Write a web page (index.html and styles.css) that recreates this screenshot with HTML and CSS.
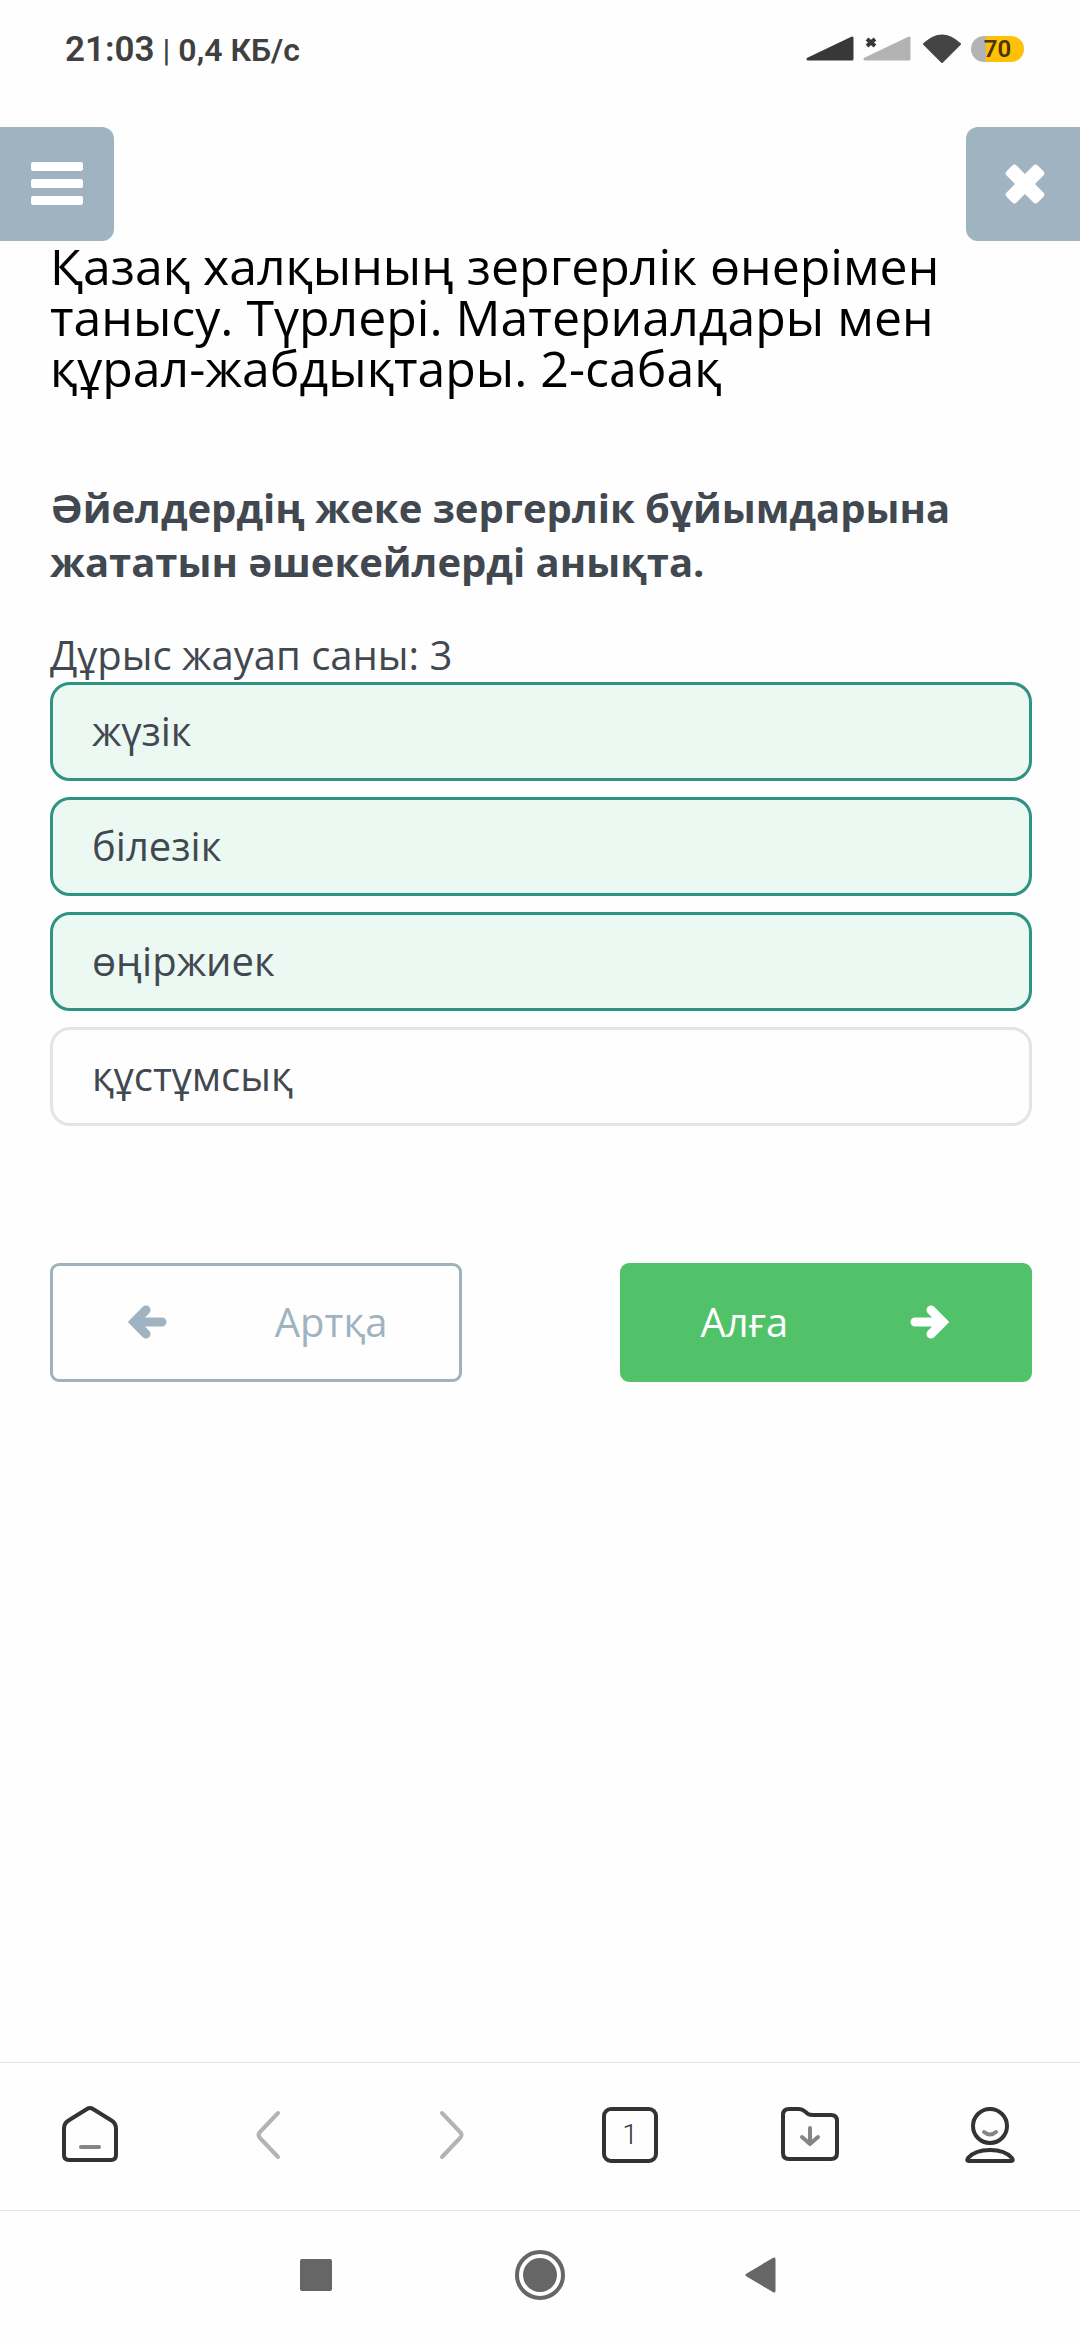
FILE: index.html
```html
<!DOCTYPE html>
<html lang="kk">
<head>
<meta charset="utf-8">
<meta name="viewport" content="width=device-width, initial-scale=1">
<title>Қазақ халқының зергерлік өнерімен танысу</title>
<link rel="stylesheet" href="styles.css">
</head>
<body>
<div class="status">
  <div class="status-text"><span class="clock">21:03</span><span class="divider">|</span><span class="speed">0,4 КБ/с</span></div>
  <div class="status-icons">
    <svg class="signal" width="48" height="26" viewBox="0 0 48 26" aria-hidden="true"><path d="M2 23 46 2V23Z" fill="#383838" stroke="#383838" stroke-width="3" stroke-linejoin="round"/></svg>
    <svg class="signal" width="48" height="26" viewBox="0 0 48 26" aria-hidden="true"><path d="M2 23 46 2V23Z" fill="#b3b3b3" stroke="#b3b3b3" stroke-width="3" stroke-linejoin="round"/><path d="M4 3 12 10M12 3 4 10" stroke="#383838" stroke-width="4"/></svg>
    <svg class="wifi" width="40" height="30" viewBox="0 0 40 30" aria-hidden="true"><path d="M2 10Q20-7 38 10L20 28Z" fill="#444" stroke="#444" stroke-width="2" stroke-linejoin="round"/></svg>
    <span class="battery">70</span>
  </div>
</div>

<header class="header">
  <button class="corner corner-menu" type="button" aria-label="Мәзір">
    <svg width="52" height="44" viewBox="0 0 52 44"><path fill="#fff" d="M2 0H50a2 2 0 0 1 2 2V7a2 2 0 0 1-2 2H2A2 2 0 0 1 0 7V2A2 2 0 0 1 2 0ZM2 17H50a2 2 0 0 1 2 2V24a2 2 0 0 1-2 2H2a2 2 0 0 1-2-2V19a2 2 0 0 1 2-2ZM2 34H50a2 2 0 0 1 2 2V41a2 2 0 0 1-2 2H2a2 2 0 0 1-2-2V36a2 2 0 0 1 2-2Z"/></svg>
  </button>
  <button class="corner corner-close" type="button" aria-label="Жабу">
    <svg width="42" height="42" viewBox="-21 -21 42 42"><g fill="#fff"><rect x="-22" y="-7" width="44" height="14" rx="3" transform="rotate(45)"/><rect x="-22" y="-7" width="44" height="14" rx="3" transform="rotate(-45)"/></g></svg>
  </button>
</header>

<main class="content">
  <h1 class="title">Қазақ халқының зергерлік өнерімен танысу. Түрлері. Материалдары мен құрал-жабдықтары. 2-сабақ</h1>
  <h2 class="question">Әйелдердің жеке зергерлік бұйымдарына жататын әшекейлерді анықта.</h2>
  <p class="hint">Дұрыс жауап саны: 3</p>
  <div class="options">
    <label class="option"><input class="option-input" type="checkbox" checked>жүзік</label>
    <label class="option"><input class="option-input" type="checkbox" checked>білезік</label>
    <label class="option"><input class="option-input" type="checkbox" checked>өңіржиек</label>
    <label class="option"><input class="option-input" type="checkbox">құстұмсық</label>
  </div>
  <div class="actions">
    <button class="action action-back" type="button">
      <svg width="40" height="36" viewBox="0 0 40 36" aria-hidden="true"><path d="M18 6 6 18 18 30M6 18H34" fill="none" stroke="currentColor" stroke-width="9" stroke-linecap="round" stroke-linejoin="miter"/><path d="M7 12 16 8V28L7 24Z" fill="currentColor"/></svg>
      <span>Артқа</span>
    </button>
    <button class="action action-next" type="button">
      <span>Алға</span>
      <svg width="40" height="36" viewBox="0 0 40 36" aria-hidden="true"><path d="M22 6 34 18 22 30M34 18H6" fill="none" stroke="currentColor" stroke-width="9" stroke-linecap="round" stroke-linejoin="miter"/><path d="M33 12 24 8V28L33 24Z" fill="currentColor"/></svg>
    </button>
  </div>
</main>

<nav class="toolbar" aria-label="Браузер">
  <button class="tool" type="button" aria-label="Басты бет">
    <svg width="60" height="60" viewBox="0 0 60 60" fill="none" stroke-width="4" stroke-linecap="round"><path stroke="#333" d="M4 24Q4 18 8.500 15.500L27 4Q30 2 33 4L51.500 15.500Q56 18 56 24V50Q56 55 51 55H9Q4 55 4 50Z"/><path stroke="#858585" d="M21 42H39"/></svg>
  </button>
  <button class="tool" type="button" aria-label="Артқа">
    <svg width="60" height="60" viewBox="0 0 60 60" fill="none" stroke="#b3b3b3" stroke-width="4" stroke-linecap="round"><path d="M38 8 20 27Q17 30 20 33L38 52"/></svg>
  </button>
  <button class="tool" type="button" aria-label="Алға">
    <svg width="60" height="60" viewBox="0 0 60 60" fill="none" stroke="#b3b3b3" stroke-width="4" stroke-linecap="round"><path d="M22 8 40 27Q43 30 40 33L22 52"/></svg>
  </button>
  <button class="tool" type="button" aria-label="Қойындылар: 1"><span class="tabs">1</span></button>
  <button class="tool" type="button" aria-label="Жүктемелер">
    <svg width="60" height="60" viewBox="0 0 60 60" fill="none" stroke-width="4" stroke-linecap="round" stroke-linejoin="round"><path stroke="#333" d="M3 10Q3 4 9 4H19Q22 4 25 6.500L28 9Q30 10 33 10H51Q57 10 57 16V48Q57 54 51 54H9Q3 54 3 48Z"/><path stroke="#858585" d="M30 23V39M22 32 30 39 38 32"/></svg>
  </button>
  <button class="tool" type="button" aria-label="Профиль">
    <svg width="60" height="60" viewBox="0 0 60 60" fill="none" stroke-width="4" stroke-linecap="round"><ellipse stroke="#333" cx="30" cy="21" rx="17" ry="17"/><path stroke="#858585" d="M24 27Q30 32 36 27"/><path stroke="#333" d="M9 56Q6 56 8 53Q15 45 30 45Q45 45 52 53Q54 56 51 56Z"/></svg>
  </button>
</nav>

<nav class="system" aria-label="Жүйе">
  <button class="tool" type="button" aria-label="Соңғы қолданбалар"><svg width="32" height="32" viewBox="0 0 32 32"><rect width="32" height="32" rx="2" fill="#666"/></svg></button>
  <button class="tool" type="button" aria-label="Үй"><svg width="50" height="50" viewBox="0 0 50 50"><circle cx="25" cy="25" r="23" fill="none" stroke="#666" stroke-width="4"/><circle cx="25" cy="25" r="17" fill="#666"/></svg></button>
  <button class="tool" type="button" aria-label="Қайту"><svg width="40" height="38" viewBox="0 0 40 38"><path d="M3 19 30 3V35Z" fill="#666" stroke="#666" stroke-width="3" stroke-linejoin="round"/></svg></button>
</nav>
</body>
</html>
```
FILE: styles.css
```css
* {
  box-sizing: border-box;
}

body {
  margin: 0;
  min-height: 100vh;
  display: flex;
  flex-direction: column;
  background: #fefefe;
  color: #414850;
  font-family: "Open Sans", "Noto Sans", sans-serif;
  font-size: 40px;
  line-height: 54px;
}

button {
  margin: 0;
  padding: 0;
  border: 0;
  background: none;
  color: inherit;
  font: inherit;
  cursor: pointer;
}

svg {
  display: block;
}

/* Phone status bar */
.status {
  display: flex;
  justify-content: space-between;
  align-items: flex-start;
  padding: 30px 56px 57px 65px;
  color: #404040;
  font-family: Roboto, sans-serif;
  font-weight: 600;
  line-height: 40px;
}

.status-text {
  display: flex;
  align-items: baseline;
  gap: 8px;
}

.clock {
  font-size: 35px;
}

.divider,
.speed {
  font-size: 32px;
}

.divider {
  font-weight: 400;
}

.status-icons {
  display: flex;
  align-items: center;
  gap: 9px;
  height: 38px;
}

.wifi {
  margin-left: 2px;
}

.battery {
  width: 53px;
  height: 26px;
  border-radius: 13px;
  background: linear-gradient(to right, #b3b3b3 15px, #ffc107 15px);
  color: #4a3600;
  font-size: 24px;
  line-height: 27px;
  text-align: center;
}

/* Lesson header */
.header {
  display: flex;
  justify-content: space-between;
}

.corner {
  display: flex;
  align-items: center;
  width: 114px;
  height: 114px;
  background: #9fb3c0;
}

.corner-menu {
  padding-left: 31px;
  border-radius: 0 12px 12px 0;
}

.corner-close {
  padding-left: 38px;
  border-radius: 12px 0 0 12px;
}

.content {
  flex: 1;
  padding: 0 48px 0 50px;
}

.title {
  margin: 0;
  color: #000;
  font-size: 50px;
  font-weight: 400;
  line-height: 51px;
}

.question {
  margin: 87px 0 0;
  font-size: 40px;
  font-weight: 700;
}

.hint {
  margin: 39px 0 0;
}

.options {
  display: grid;
  gap: 16px;
}

.option {
  display: block;
  padding: 19px 39px 20px;
  border: 3px solid #e2e5e5;
  border-radius: 20px;
}

.option:has(:checked) {
  border-color: #2f9384;
  background: #ecf9f3;
}

.option-input {
  position: absolute;
  appearance: none;
  margin: 0;
}

.actions {
  display: flex;
  justify-content: space-between;
  margin-top: 137px;
}

.action {
  display: flex;
  justify-content: space-between;
  align-items: center;
  width: 42%;
  padding: 29px 72px 30px 75px;
  border: 3px solid #9fb3be;
  border-radius: 9px;
}

.action-back {
  color: #9fb3c0;
}

.action-next {
  padding: 29px 80px 30px 78px;
  border-color: #52c26a;
  background: #52c26a;
  color: #fff;
}

/* Browser toolbar */
.toolbar {
  display: grid;
  grid-template-columns: repeat(6, 1fr);
  padding: 42px 0 45px;
  border: solid #e3e3e3;
  border-width: 1px 0;
}

.tool {
  display: flex;
  justify-content: center;
  align-items: center;
}

.tabs {
  width: 56px;
  height: 56px;
  border: 4px solid #333;
  border-radius: 9px;
  color: #333;
  font-family: Roboto, sans-serif;
  font-size: 28px;
  font-weight: 300;
  line-height: 48px;
}

.system {
  display: grid;
  grid-template-columns: repeat(3, 224px);
  justify-content: center;
  padding: 39px 0 40px;
}
```
